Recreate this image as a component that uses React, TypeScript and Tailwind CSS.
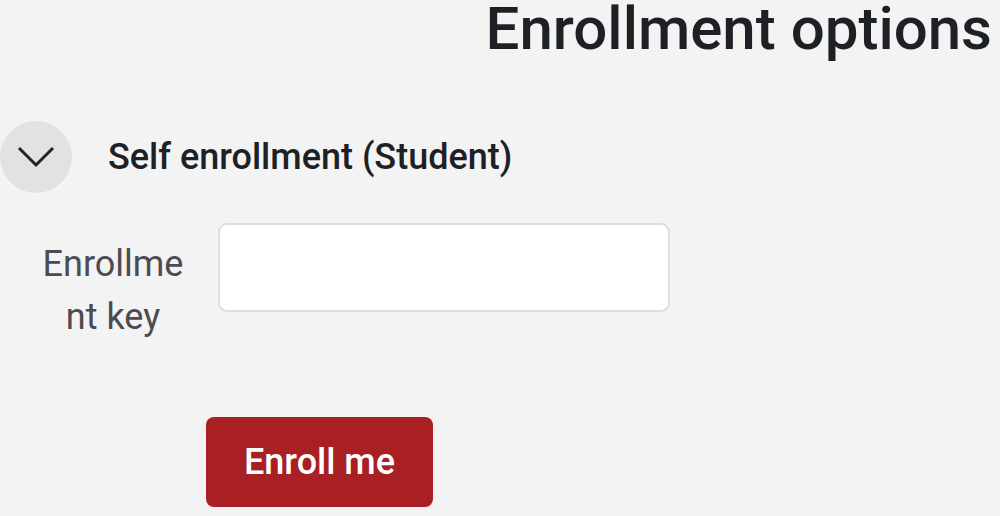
import React from "react";

export default function App() {
  return (
    <div className="w-[1000px] h-[516px] overflow-hidden bg-[#f3f3f3] text-[#1d2125]" style={{ fontFamily: "Roboto, 'Liberation Sans', sans-serif" }}>
      <div className="flex justify-end pr-[8px] h-[57px]">
        <h2 className="text-[60px] leading-[57px] font-medium text-[#1d2125] whitespace-nowrap">Enrollment options</h2>
      </div>
      <div className="flex items-center mt-[64px] h-[72px]">
        <div className="w-[72px] h-[72px] rounded-full bg-[#e2e2e2] flex items-center justify-center">
          <svg width="38" height="22" viewBox="0 0 38 22" fill="none">
            <path d="M2 2 L19 19 L36 2" stroke="#222" strokeWidth="3" strokeLinecap="butt" strokeLinejoin="miter" />
          </svg>
        </div>
        <h3 className="ml-[36px] text-[36px] leading-[44px] font-medium text-[#1d2125] whitespace-nowrap">Self enrollment (Student)</h3>
      </div>
      <div className="flex items-start mt-[30px] h-[121px]">
        <div className="w-[218px] flex justify-center pt-[15px]">
          <div className="w-[150px] ml-[8px] text-center text-[36px] leading-[53px] text-[#4b4b52]">Enrollme nt key</div>
        </div>
        <div className="w-[452px] h-[89px] bg-white border-2 border-[#dedede] rounded-[9px]"></div>
      </div>
      <div className="flex mt-[73px] pl-[206px]">
        <button className="w-[227px] h-[90px] rounded-[8px] bg-[#a81f24] text-white text-[36px] font-medium">Enroll me</button>
      </div>
    </div>
  );
}
